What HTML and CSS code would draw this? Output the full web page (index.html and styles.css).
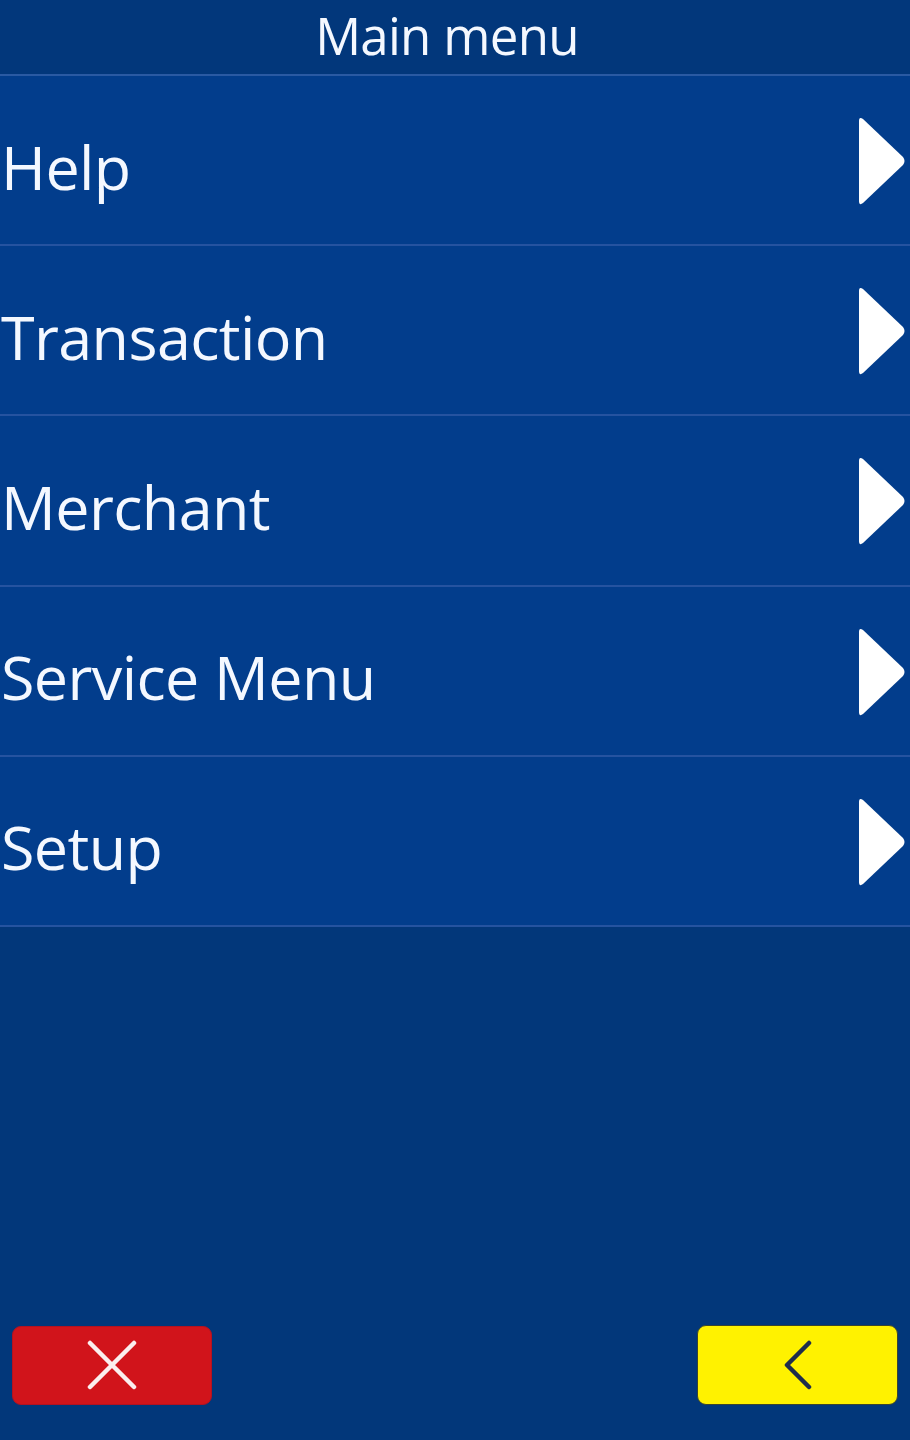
FILE: index.html
```html
<!DOCTYPE html>
<html>
<head>
<meta charset="utf-8">
<link rel="stylesheet" href="styles.css">
</head>
<body>
<div class="screen">
  <header class="title">Main menu</header>
  <ul class="menu">
    <li class="item"><span class="label">Help</span><svg class="arrow" viewBox="0 0 52 92"><path d="M4 6 Q4 1 8 4 L48 42 Q51 46 48 50 L8 88 Q4 91 4 86 Z" fill="#ffffff"/></svg></li>
    <li class="item"><span class="label">Transaction</span><svg class="arrow" viewBox="0 0 52 92"><path d="M4 6 Q4 1 8 4 L48 42 Q51 46 48 50 L8 88 Q4 91 4 86 Z" fill="#ffffff"/></svg></li>
    <li class="item"><span class="label">Merchant</span><svg class="arrow" viewBox="0 0 52 92"><path d="M4 6 Q4 1 8 4 L48 42 Q51 46 48 50 L8 88 Q4 91 4 86 Z" fill="#ffffff"/></svg></li>
    <li class="item"><span class="label">Service Menu</span><svg class="arrow" viewBox="0 0 52 92"><path d="M4 6 Q4 1 8 4 L48 42 Q51 46 48 50 L8 88 Q4 91 4 86 Z" fill="#ffffff"/></svg></li>
    <li class="item"><span class="label">Setup</span><svg class="arrow" viewBox="0 0 52 92"><path d="M4 6 Q4 1 8 4 L48 42 Q51 46 48 50 L8 88 Q4 91 4 86 Z" fill="#ffffff"/></svg></li>
  </ul>
  <div class="spacer"></div>
  <footer class="footer">
    <button class="btn btn-cancel" aria-label="Cancel">
      <svg class="icon-x" viewBox="0 0 50 50"><path d="M3 3 L47 47 M47 3 L3 47" stroke="#fbeeee" stroke-width="4.5" stroke-linecap="round"/></svg>
    </button>
    <button class="btn btn-back" aria-label="Back">
      <svg class="icon-back" viewBox="0 0 30 50"><path d="M26 3 L4 25 L26 47" stroke="#1f2d4c" stroke-width="4.5" fill="none" stroke-linecap="round" stroke-linejoin="round"/></svg>
    </button>
  </footer>
</div>
</body>
</html>
```

FILE: styles.css
```css
html, body {
  margin: 0;
  padding: 0;
  background: #02377a;
}

.screen {
  width: 910px;
  height: 1440px;
  display: flex;
  flex-direction: column;
  background: #02377a;
  font-family: "Open Sans", "Noto Sans", "DejaVu Sans", sans-serif;
  color: #f4f8ff;
  overflow: hidden;
}

.title {
  height: 74px;
  box-sizing: border-box;
  border-bottom: 2px solid #2a5aa3;
  background: #02377b;
  display: flex;
  align-items: center;
  justify-content: center;
  font-size: 51px;
  letter-spacing: -0.7px;
  line-height: 1;
  padding-right: 16px;
  padding-bottom: 4px;
  flex: 0 0 76px;
}

.menu {
  list-style: none;
  margin: 0;
  padding: 0;
  background: #023d8c;
}

.item {
  height: 168.2px;
  border-bottom: 2px solid #2553a0;
  display: flex;
  align-items: center;
  justify-content: space-between;
  padding-left: 1px;
  padding-right: 3px;
}

.label {
  font-size: 61px;
  letter-spacing: -0.6px;
  line-height: 1;
  padding-top: 12px;
}

.arrow {
  width: 52px;
  height: 92px;
  display: block;
  margin-top: 2px;
}

.spacer {
  flex: 1;
}

.footer {
  display: flex;
  justify-content: space-between;
  align-items: center;
  padding: 0 12px 35px 12px;
}

.btn {
  width: 200px;
  height: 79px;
  border-radius: 9px;
  display: flex;
  align-items: center;
  justify-content: center;
  padding: 0;
  margin: 0;
  box-sizing: border-box;
}

.btn-cancel {
  background: #d1141b;
  border: 1px solid #b41220;
}

.btn-back {
  width: 201px;
  height: 80px;
  background: #fff200;
  border: 1px solid #3a4530;
}

.icon-x {
  width: 50px;
  height: 50px;
  display: block;
}

.icon-back {
  width: 30px;
  height: 50px;
  display: block;
}
```
